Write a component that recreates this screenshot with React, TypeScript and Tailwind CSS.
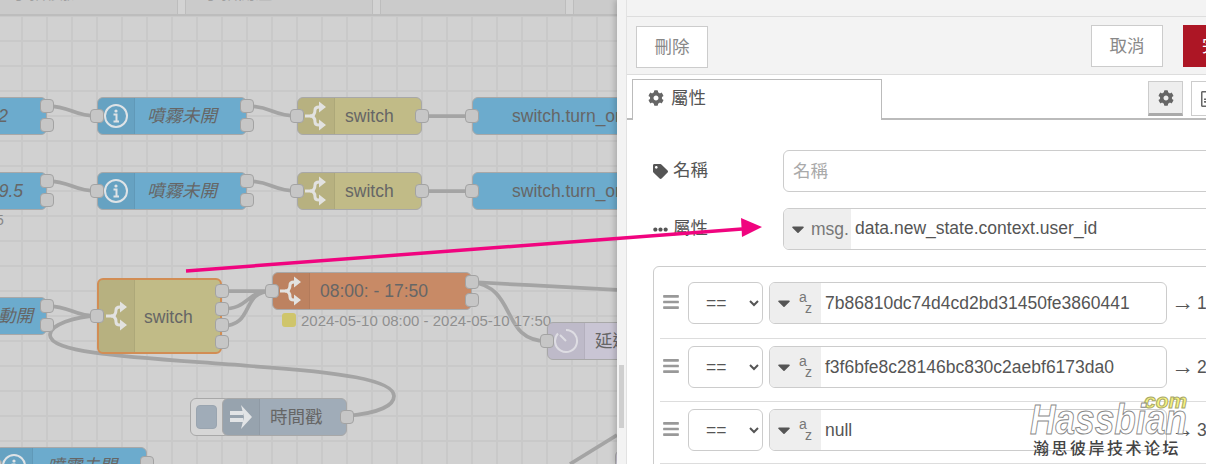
import { FaCaretDown, FaBars, FaCog, FaEllipsisH, FaRegFileAlt, FaTag } from 'react-icons/fa';

const cjk = "font-['Liberation_Sans','Noto_Sans_CJK_TC',sans-serif]";

type Port = { side: 'in' | 'out'; y: number };

function SwitchIcon() {
    return (
        <svg viewBox="0 0 24 30" className="h-[30px] w-[24px]" fill="none" stroke="#e2e2e0" strokeWidth="3">
            <path d="M1 15 H6 C10 15 11 12 11 9 C11 7 12 6 15 6" />
            <path d="M6 15 C10 15 11 18 11 21 C11 23 12 24 15 24" />
            <path d="M15 0.5 L22 6 L15 11.5 Z M15 18.5 L22 24 L15 29.5 Z" fill="#e2e2e0" stroke="none" />
        </svg>
    );
}

function InfoIcon() {
    return (
        <svg viewBox="0 0 26 26" className="h-[26px] w-[26px]" fill="none" stroke="#dfe3e6" strokeWidth="2">
            <circle cx="13" cy="13" r="11" />
            <circle cx="13" cy="8" r="1.6" fill="#dfe3e6" stroke="none" />
            <path d="M10.5 11.5 H13.5 V18 M10.5 18.5 H16" strokeWidth="2" />
        </svg>
    );
}

function DelayIcon() {
    return (
        <svg viewBox="0 0 26 26" className="h-[26px] w-[26px]" fill="none" stroke="#dedde3" strokeWidth="2">
            <path d="M13 2 A11 11 0 1 1 5 5.5" />
            <path d="M7 7 L13 13" />
        </svg>
    );
}

function InjectIcon() {
    return (
        <svg viewBox="0 0 24 26" className="h-[26px] w-[24px]" fill="#e2e4e6">
            <path d="M1 7 H14 V11 H1 Z M1 14 H14 V18 H1 Z" />
            <path d="M12 1 L23 13 L12 25 L15 13 Z" />
        </svg>
    );
}

function Node({ x, y, w, h = 38, bg, sect, icon, label, italic, ports = [], border = 'border border-[#a8a8a8]', left = 10, right }: {
    x: number; y: number; w: number; h?: number; bg: string; sect: number; icon: React.ReactNode; label: string;
    italic?: boolean; ports?: Port[]; border?: string; left?: number; right?: number;
}) {
    return (
        <div className="absolute" style={{ left: x, top: y, width: w, height: h }}>
            <div className={`flex h-full overflow-hidden rounded-[6px] ${border} ${bg}`}>
                {sect > 0 && (
                    <div className="flex shrink-0 items-center justify-center border-r border-black/5 bg-black/5" style={{ width: sect }}>
                        {icon}
                    </div>
                )}
                <div
                    className={`flex-1 whitespace-nowrap text-[17.5px] text-[#666] ${cjk} ${italic ? 'italic' : ''} ${right !== undefined ? 'text-right' : 'text-left'}`}
                    style={{ paddingLeft: right !== undefined ? 0 : left, paddingRight: right ?? 0, lineHeight: `${h - 2}px` }}
                >
                    {label}
                </div>
            </div>
            {ports.map((p, i) => (
                <div
                    key={i}
                    className="absolute h-[14px] w-[14px] rounded-[4px] border border-[#a3a3a3] bg-[#c6c6c6]"
                    style={{ top: p.y - 7, left: p.side === 'in' ? -7 : w - 7 }}
                />
            ))}
        </div>
    );
}

function Wires() {
    return (
        <svg className="absolute left-0 top-0 h-[464px] w-[617px]" viewBox="0 0 617 464" fill="none" stroke="#a4a4a4" strokeWidth="3.75">
            <path d="M47 106 C72 106 72 116 97 116 M247 106 C272 106 272 116 297 116 M422 116 H472" />
            <path d="M47 181 C72 181 72 191 97 191 M247 181 C272 181 272 191 297 191 M422 191 H472" />
            <path d="M47 306 C72 306 72 316 97 316" />
            <path d="M347 416 C380 413 394 405 394 396 C394 380 340 372 250 366 C150 358 50 355 50 335 C50 325 75 316 97 316" />
            <path d="M222 291 H272 M222 309 C250 309 245 291 272 291 M222 326 C255 326 240 291 272 291" />
            <path d="M472 282 C520 285 570 287 617 290" />
            <path d="M472 282 C518 288 500 341 547 341" />
            <path d="M617 435 L570 464" />
        </svg>
    );
}

function Canvas() {
    const blue = 'bg-[#6cabcd]';
    const yellow = 'bg-[#c1bb87]';
    const row = (top: number, label: string, right: number) => (
        <>
            <Node x={-80} y={top} w={127} bg={blue} sect={0} icon={null} label={label} italic right={right} ports={[{ side: 'out', y: 9 }, { side: 'out', y: 28 }]} />
            <Node x={97} y={top} w={150} bg={blue} sect={37} icon={<InfoIcon />} label="噴霧未開" italic left={12} ports={[{ side: 'in', y: 19 }, { side: 'out', y: 9 }, { side: 'out', y: 28 }]} />
            <Node x={297} y={top} w={125} bg={yellow} sect={37} icon={<SwitchIcon />} label="switch" ports={[{ side: 'in', y: 19 }, { side: 'out', y: 19 }]} />
            <Node x={472} y={top} w={180} bg={blue} sect={0} icon={null} label="switch.turn_on" left={39} ports={[{ side: 'in', y: 19 }]} />
        </>
    );
    return (
        <div className="relative flex-1 overflow-hidden bg-[#d1d1d1] bg-[linear-gradient(to_right,#c9c9c9_2px,transparent_2px),linear-gradient(to_bottom,#c9c9c9_2px,transparent_2px)] bg-[length:25px_25px] bg-[position:21px_15px]">
            <div className={`flex h-[16px] overflow-hidden border-b-2 border-[#bdbdbd] bg-[#cbcbcb] text-[17px] text-[#9f9f9f] ${cjk}`}>
                <div className="-mt-[19px] w-[178px] border-r border-[#bdbdbd] pl-[12px]">手指模擬</div>
                <div className="w-[8px] border-r border-[#bdbdbd] bg-[#d3d3d3]" />
                <div className="-mt-[19px] w-[187px] border-r border-[#bdbdbd] pl-[18px]">手指開溫</div>
                <div className="w-[8px] border-r border-[#bdbdbd] bg-[#d3d3d3]" />
                <div className="-mt-[19px] w-[185px] border-r border-[#bdbdbd] pl-[16px] tracking-[3px]">Solar</div>
                <div className="w-[8px] border-r border-[#bdbdbd] bg-[#d3d3d3]" />
                <div className="-mt-[19px] flex-1 pl-[14px]">Fan</div>
            </div>
            <Wires />
            {row(97, '2', 38)}
            {row(172, '9.5', 23)}
            <div className={`absolute -left-[4px] top-[212px] text-[14px] leading-[16px] text-[#888] ${cjk}`}>5</div>

            <Node x={-80} y={297} w={127} bg={blue} sect={0} icon={null} label="動開" italic right={13} ports={[{ side: 'out', y: 9 }, { side: 'out', y: 28 }]} />
            <Node x={97} y={278} w={125} h={76} bg={yellow} sect={36} icon={<SwitchIcon />} label="switch" left={9} border="border-2 border-[#d28d54]" ports={[{ side: 'in', y: 38 }, { side: 'out', y: 13 }, { side: 'out', y: 31 }, { side: 'out', y: 47 }, { side: 'out', y: 64 }]} />
            <Node x={272} y={272} w={200} bg="bg-[#c88a66]" sect={37} icon={<SwitchIcon />} label="08:00: - 17:50" ports={[{ side: 'in', y: 19 }, { side: 'out', y: 10 }, { side: 'out', y: 28 }]} />
            <div className="absolute left-[282px] top-[313px] h-[14px] w-[14px] rounded-[3px] bg-[#cfc56b]" />
            <div className={`absolute left-[301px] top-[311px] whitespace-nowrap text-[15px] leading-[20px] text-[#8f8f8f] [text-shadow:0_0_3px_#d8d8d8] ${cjk}`}>
                2024-05-10 08:00 - 2024-05-10 17:50
            </div>
            <Node x={547} y={322} w={120} bg="bg-[#c9c5d4]" sect={37} icon={<DelayIcon />} label="延遲" ports={[{ side: 'in', y: 19 }]} />

            <div className="absolute left-[190px] top-[398px] flex h-[38px] w-[40px] items-center rounded-[6px] border border-[#a8a8a8] bg-[#d6d6d6] pl-[5px]">
                <div className="h-[24px] w-[21px] rounded-[4px] border border-[#9aa5b0] bg-[#a0acb8]" />
            </div>
            <Node x={222} y={398} w={125} bg="bg-[#a0acb8]" sect={37} icon={<InjectIcon />} label="時間戳" ports={[{ side: 'out', y: 19 }]} />
            <Node x={-5} y={447} w={152} bg={blue} sect={37} icon={<InfoIcon />} label="噴霧未開" italic left={14} ports={[{ side: 'in', y: 19 }, { side: 'out', y: 16 }]} />
            <div className="absolute left-[615px] top-[450px] h-[30px] w-[20px] rounded-[6px] border border-[#a8a8a8] bg-[#c9c5d4]" />
        </div>
    );
}

function TypedRow({ value, arrow, pad }: { value: string; arrow: string; pad: string }) {
    return (
        <div className={`ml-[6px] flex items-start border-b border-[#ddd] pt-[7px] ${pad}`}>
            <FaBars className="ml-[3px] mr-[9px] mt-[11px] h-[18px] w-[16px] shrink-0 text-[#999]" />
            <select defaultValue="==" className={`h-[42px] w-[75px] shrink-0 rounded-[6px] border border-[#ccc] bg-white pl-[13px] text-[17.5px] text-[#555] ${cjk}`}>
                <option value="==">==</option>
            </select>
            <div className="ml-[6px] flex h-[42px] w-[398px] shrink-0 overflow-hidden rounded-[6px] border border-[#ccc] bg-white">
                <div className="flex w-[51px] shrink-0 items-center bg-[#eee] pl-[7px] text-[#777]">
                    <FaCaretDown className="h-[20px] w-[14px] text-[#555]" />
                    <div className={`relative ml-[8px] h-[30px] w-[14px] text-[14px] leading-[14px] ${cjk}`}>
                        <span className="absolute left-0 top-[2px]">a</span>
                        <span className="absolute left-[6px] top-[13px]">z</span>
                    </div>
                </div>
                <div className={`pl-[4px] text-[17.5px] leading-[40px] text-[#555] ${cjk}`}>{value}</div>
            </div>
            <div className={`ml-[4px] flex h-[42px] shrink-0 items-center whitespace-nowrap text-[17.5px] text-[#555] ${cjk}`}>
                <span className="-mt-[3px] text-[23px] leading-[36px]">→</span>
                <span className="ml-[3px]">{arrow}</span>
            </div>
        </div>
    );
}

function Panel() {
    return (
        <div className="relative flex w-[589px] shrink-0 flex-col overflow-hidden bg-white shadow-[-2px_0_6px_rgba(0,0,0,0.2)]">
            <div className="absolute left-0 top-0 h-full w-[10px] border-r border-[#e2e2e2] bg-[#f3f3f3]">
                <div className="ml-[2px] mt-[365px] h-[63px] w-[5px] bg-[#cfcfcf]" />
            </div>
            <div className="ml-[10px] flex flex-col">
                <div className="h-[17px] border-b border-[#ddd] bg-[#f3f3f3]" />
                <div className={`flex h-[58px] items-start border-b border-[#ddd] bg-[#f3f3f3] pl-[9px] pt-[8px] text-[17.5px] text-[#888] ${cjk}`}>
                    <div className="mt-[1px] flex h-[42px] w-[72px] shrink-0 items-center justify-center border border-[#ccc] bg-white">刪除</div>
                    <div className="ml-[383px] flex h-[42px] w-[72px] shrink-0 items-center justify-center border border-[#ccc] bg-white">取消</div>
                    <div className="ml-[20px] flex h-[42px] w-[60px] shrink-0 items-center whitespace-nowrap border border-[#ad1625] bg-[#ad1625] pl-[18px] text-white">完成</div>
                </div>
                <div className="flex h-[45px] border-b-2 border-[#bbb] pl-[5px] pt-[4px]">
                    <div className={`flex h-[41px] w-[250px] shrink-0 items-center gap-[7px] border border-b-0 border-[#bbb] bg-white pb-[4px] pl-[15px] text-[17.5px] text-[#555] ${cjk}`}>
                        <FaCog className="h-[16px] w-[16px] text-[#666]" />
                        屬性
                    </div>
                    <div className="ml-[266px] mt-[2px] flex h-[35px] w-[35px] shrink-0 items-center justify-center border border-b-[3px] border-[#ccc] border-b-[#aaa] bg-[#eee]">
                        <FaCog className="h-[16px] w-[16px] text-[#666]" />
                    </div>
                    <div className="ml-[8px] mt-[2px] flex h-[35px] w-[35px] shrink-0 items-center justify-start border border-[#ccc] bg-white pl-[8px]">
                        <FaRegFileAlt className="h-[16px] w-[14px] shrink-0 text-[#666]" />
                    </div>
                </div>
                <div className={`flex flex-col pl-[26px] pt-[30px] text-[17.5px] text-[#555] ${cjk}`}>
                    <div className="flex h-[42px] items-center">
                        <div className="flex w-[130px] shrink-0 items-center gap-[5px]">
                            <FaTag className="h-[15px] w-[15px] text-[#555]" />
                            <span className="-mt-[2px]">名稱</span>
                        </div>
                        <div className="flex h-[42px] w-[450px] shrink-0 items-center rounded-[6px] border border-[#ccc] pl-[9px] text-[#aaa]">名稱</div>
                    </div>
                    <div className="mt-[16px] flex h-[42px] items-center">
                        <div className="flex w-[130px] shrink-0 items-center gap-[5px]">
                            <FaEllipsisH className="h-[15px] w-[15px] text-[#555]" />
                            <span className="-mt-[2px]">屬性</span>
                        </div>
                        <div className="flex h-[42px] w-[450px] shrink-0 overflow-hidden rounded-[6px] border border-[#ccc]">
                            <div className="flex w-[67px] shrink-0 items-center gap-[6px] bg-[#eee] pl-[7px] text-[#777]">
                                <FaCaretDown className="h-[20px] w-[14px] text-[#555]" />
                                msg.
                            </div>
                            <div className="pl-[4px] leading-[38px]">data.new_state.context.user_id</div>
                        </div>
                    </div>
                    <div className="mt-[16px] h-[300px] w-[600px] shrink-0 rounded-[6px] border border-[#ccc] pt-[8px]">
                        <TypedRow value="7b86810dc74d4cd2bd31450fe3860441" arrow="1" pad="pb-[14px]" />
                        <TypedRow value="f3f6bfe8c28146bc830c2aebf6173da0" arrow="2" pad="pb-[13px]" />
                        <TypedRow value="null" arrow="3" pad="pb-[12px]" />
                    </div>
                </div>
            </div>
        </div>
    );
}

function Arrow() {
    return (
        <svg className="absolute left-[180px] top-[210px] h-[70px] w-[590px]" viewBox="0 0 590 70">
            <path d="M6 61 L562 19" stroke="#f0047f" strokeWidth="3.5" fill="none" />
            <path d="M582 17 L561 8 L562 27 Z" fill="#f0047f" />
        </svg>
    );
}

function Watermark() {
    return (
        <div className="absolute left-[1030px] top-[390px] h-[70px] w-[160px]">
            <div className="absolute left-[114px] top-0 font-['Liberation_Sans',sans-serif] text-[21px] font-bold italic leading-[22px] text-[#f7f37e] [-webkit-text-stroke:1px_#a8a86a]">com</div>
            <div className="absolute left-0 top-[10px] origin-left scale-x-[0.84] font-['Liberation_Sans',sans-serif] text-[42px] font-bold italic leading-[40px] text-white [-webkit-text-stroke:1px_#888]">Hassbian</div>
            <div className="absolute left-[3px] top-[47px] whitespace-nowrap font-['Noto_Sans_CJK_SC',sans-serif] text-[16px] font-medium leading-[20px] tracking-[2.5px] text-[#444]">瀚思彼岸技术论坛</div>
        </div>
    );
}

export default function App() {
    return (
        <div className="relative flex h-[464px] w-[1206px] overflow-hidden bg-white">
            <Canvas />
            <Panel />
            <Arrow />
            <Watermark />
        </div>
    );
}
